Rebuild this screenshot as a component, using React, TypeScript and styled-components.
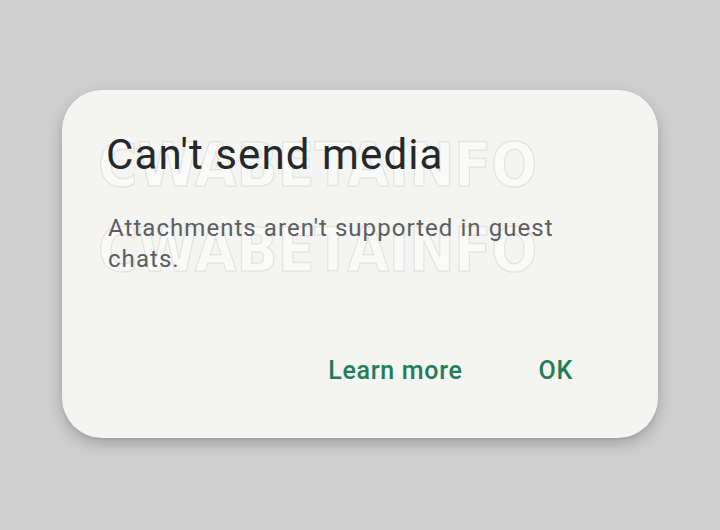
import React from 'react';
import styled, { createGlobalStyle } from 'styled-components';

const GlobalStyle = createGlobalStyle`
  html, body {
    margin: 0;
    padding: 0;
    background: #cfcfcf;
    font-family: Roboto, "Noto Sans", sans-serif;
  }
`;

const Screen = styled.div`
  width: 720px;
  height: 530px;
  background: #cfcfcf;
  padding: 90px 62px 0 62px;
  box-sizing: border-box;
`;

const Dialog = styled.section`
  position: relative;
  width: 596px;
  height: 348px;
  box-sizing: border-box;
  padding: 41px 46px 52px 44px;
  background: #f4f4f3;
  border-radius: 40px;
  box-shadow: 0 6px 14px rgba(0, 0, 0, 0.22), 0 1px 3px rgba(0, 0, 0, 0.08);
  display: flex;
  flex-direction: column;
  overflow: hidden;
`;

// faint outlined watermark lying over the dialog text
const Watermark = styled.div<{ $top: number }>`
  position: absolute;
  left: 36px;
  top: ${p => p.$top}px;
  font-family: "DejaVu Sans", sans-serif;
  font-weight: bold;
  font-size: 60px;
  line-height: 1;
  color: rgba(255, 255, 255, 0.5);
  -webkit-text-stroke: 1.5px rgba(0, 0, 0, 0.08);
  transform: scaleX(0.9);
  transform-origin: left top;
  pointer-events: none;
  white-space: nowrap;
`;

const Title = styled.h1`
  position: relative;
  margin: 0;
  font-size: 42px;
  line-height: 48px;
  font-weight: 400;
  letter-spacing: 1.1px;
  color: #25282a;
`;

const Message = styled.p`
  position: relative;
  margin: 34px 0 0 2px;
  font-size: 24px;
  line-height: 31px;
  letter-spacing: 1.05px;
  color: #5c5e60;
`;

const Actions = styled.div`
  position: relative;
  margin-top: auto;
  display: flex;
  justify-content: flex-end;
  gap: 76px;
  padding-right: 39px;
`;

const ActionButton = styled.button`
  background: none;
  border: none;
  padding: 0;
  font-family: Roboto, "Noto Sans", sans-serif;
  font-size: 25px;
  line-height: 30px;
  font-weight: 500;
  letter-spacing: 0.7px;
  color: #1f7e57;
  cursor: pointer;
`;

function App() {
  return (
    <Screen>
      <GlobalStyle />
      <Dialog>
        <Watermark $top={45}>CWABETAINFO</Watermark>
        <Watermark $top={130}>CWABETAINFO</Watermark>
        <Title>Can't send media</Title>
        <Message>Attachments aren't supported in guest chats.</Message>
        <Actions>
          <ActionButton>Learn more</ActionButton>
          <ActionButton>OK</ActionButton>
        </Actions>
      </Dialog>
    </Screen>
  );
}

export default App;
